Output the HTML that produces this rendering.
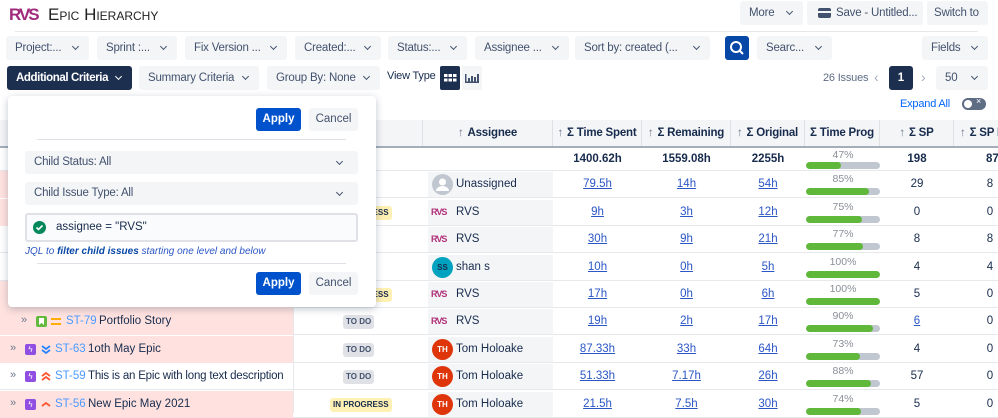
<!DOCTYPE html>
<html><head><meta charset="utf-8"><style>
*{box-sizing:border-box;margin:0;padding:0}
body{width:998px;height:413px;overflow:hidden;background:#fff;font-family:"Liberation Sans",sans-serif;font-size:11.5px;color:#172b4d;position:relative}
.a{position:absolute}
.btn{position:absolute;height:24px;background:#f4f5f7;border-radius:3px;color:#42526e;font-size:11.5px;line-height:24px;padding-left:9px;white-space:nowrap;letter-spacing:-0.2px}
.chev{display:inline-block;width:5px;height:5px;border-right:1.5px solid currentColor;border-bottom:1.5px solid currentColor;transform:rotate(45deg);position:absolute;right:11px;top:8px}
.hd{position:absolute;top:120px;height:26px;line-height:26px;font-weight:bold;font-size:11.5px;text-align:center;color:#172b4d;border-right:1px solid #dfe1e6;white-space:nowrap;letter-spacing:-0.2px}
.hd .up{color:#6b778c;font-weight:normal;margin-right:4px}
.row{position:absolute;left:0;width:998px;height:27px;border-bottom:1px solid #e6e8eb}
.cell{position:absolute;top:0;height:27px;line-height:27px;text-align:center;font-size:11.5px}
.lk{color:#2b56c5;text-decoration:underline}
.pct{position:absolute;left:806px;width:74px;top:2px;text-align:center;font-size:10.5px;color:#8a8f98;line-height:13px}
.bar{position:absolute;left:806px;width:74px;top:17px;height:7px;border-radius:4px;background:#c1c7d0;overflow:hidden}
.bar i{display:block;height:7px;background:#5fb83a;border-radius:4px}
.asg{position:absolute;left:428px;width:125px;top:1px;height:25px;background:#f4f5f7}
.av{position:absolute;left:4px;top:2px;width:21px;height:21px;border-radius:50%;color:#fff;font-size:8px;text-align:center;line-height:21px;font-weight:bold}
.nm{position:absolute;left:28px;top:0;line-height:25px;font-size:11.5px;color:#172b4d}
.rvs{position:absolute;left:3px;top:7px;font-weight:bold;font-size:9px;color:#b0307a;letter-spacing:-1px}
.pill{position:absolute;top:7px;height:14px;line-height:14px;font-size:8px;font-weight:bold;padding:0 3px;border-radius:3px}
.todo{background:#dfe1e6;color:#42526e}
.inp{background:#fff0b3;color:#172b4d}
.key{position:absolute;top:7px;color:#4c9aff;font-size:11.5px}
.sum{position:absolute;top:7px;font-size:11.5px;color:#172b4d;white-space:nowrap}
</style></head><body>

<div class="a" style="left:9px;top:5px;font-size:17px;font-weight:bold;letter-spacing:-2px;color:#a02b7d">RVS</div>
<div class="a" style="left:48px;top:5px;font-size:17px;color:#222;font-variant:small-caps">Epic Hierarchy</div>
<div class="a" style="left:15px;top:31px;width:963px;height:1px;background:#e8e8e8"></div>

<div class="btn" style="left:740px;top:1px;width:63px">More<span class="chev"></span></div>
<div class="btn" style="left:807px;top:1px;width:116px;padding-left:29px">Save - Untitled...<span class="a" style="left:11px;top:7px;width:13px;height:10px;background:#42526e;border-radius:2px"></span><span class="a" style="left:11px;top:10px;width:13px;height:2px;background:#f4f5f7"></span></div>
<div class="btn" style="left:927px;top:1px;width:61px;padding-left:7px">Switch to</div>

<div class="btn" style="left:6px;top:36px;width:83px">Project:...<span class="chev"></span></div>
<div class="btn" style="left:97px;top:36px;width:80px">Sprint :...<span class="chev"></span></div>
<div class="btn" style="left:185px;top:36px;width:102px">Fix Version ...<span class="chev"></span></div>
<div class="btn" style="left:295px;top:36px;width:86px">Created:...<span class="chev"></span></div>
<div class="btn" style="left:388px;top:36px;width:79px">Status:...<span class="chev"></span></div>
<div class="btn" style="left:475px;top:36px;width:94px">Assignee ...<span class="chev"></span></div>
<div class="btn" style="left:575px;top:36px;width:135px">Sort by: created (...<span class="chev"></span></div>
<div class="a" style="left:725px;top:36px;width:24px;height:24px;background:#0747a6;border-radius:3px">
<svg width="24" height="24"><circle cx="11" cy="11" r="5" fill="none" stroke="#fff" stroke-width="2"/><line x1="14.5" y1="14.5" x2="18" y2="18" stroke="#fff" stroke-width="2"/></svg></div>
<div class="btn" style="left:757px;top:36px;width:75px">Searc...<span class="chev"></span></div>
<div class="btn" style="left:922px;top:36px;width:66px">Fields<span class="chev"></span></div>

<div class="btn" style="left:7px;top:66px;width:125px;background:#1d2f4f;color:#fff;font-weight:bold;letter-spacing:-0.4px">Additional Criteria<span class="chev"></span></div>
<div class="btn" style="left:139px;top:66px;width:120px">Summary Criteria<span class="chev"></span></div>
<div class="btn" style="left:267px;top:66px;width:113px">Group By: None<span class="chev"></span></div>
<div class="a" style="left:387px;top:70px;font-size:11px;color:#172b4d;letter-spacing:-0.2px">View Type</div>
<div class="a" style="left:440px;top:66px;width:20px;height:24px;background:#1d2f4f;border-radius:2px">
<svg width="20" height="24"><g fill="#fff"><rect x="4" y="8" width="3.5" height="3"/><rect x="8.5" y="8" width="3.5" height="3"/><rect x="13" y="8" width="3.5" height="3"/><rect x="4" y="12.5" width="3.5" height="3"/><rect x="8.5" y="12.5" width="3.5" height="3"/><rect x="13" y="12.5" width="3.5" height="3"/></g></svg></div>
<div class="a" style="left:462px;top:66px;width:20px;height:24px;background:#f4f5f7">
<svg width="20" height="24"><g fill="#42526e"><rect x="3" y="8" width="1.5" height="9"/><rect x="3" y="15.5" width="14" height="1.5"/><rect x="6" y="12" width="2" height="4"/><rect x="9" y="10" width="2" height="6"/><rect x="12" y="11" width="2" height="5"/><rect x="15" y="8" width="2" height="8"/></g></svg></div>

<div class="a" style="left:823px;top:72px;color:#5e6c84;font-size:11px;letter-spacing:-0.2px">26 Issues</div>
<div class="a" style="left:874px;top:69px;color:#a5adba;font-size:14px">‹</div>
<div class="a" style="left:889px;top:66px;width:24px;height:24px;background:#1d2f4f;border-radius:3px;color:#fff;text-align:center;line-height:24px;font-weight:bold">1</div>
<div class="a" style="left:921px;top:69px;color:#a5adba;font-size:14px">›</div>
<div class="btn" style="left:936px;top:66px;width:52px">50<span class="chev"></span></div>

<div class="a" style="left:900px;top:98px;color:#0065ff;font-size:11px;letter-spacing:-0.2px">Expand All</div>
<div class="a" style="left:962px;top:98px;width:24px;height:12px;background:#5e6c84;border-radius:6px"><div class="a" style="left:2px;top:2px;width:8px;height:8px;background:#fff;border-radius:50%"></div><div class="a" style="left:14px;top:-2px;color:#fff;font-size:9px">×</div></div>

<div class="a" style="left:0;top:120px;width:998px;height:26px;background:#f4f5f7"></div>
<div class="a" style="left:0;top:146px;width:998px;height:2px;background:#a5adba"></div>
<div class="hd" style="left:293px;width:130px"></div>
<div class="hd" style="left:423px;width:130px"><span class="up">↑</span>Assignee</div>
<div class="hd" style="left:553px;width:89px"><span class="up">↑</span>Σ Time Spent</div>
<div class="hd" style="left:642px;width:89px"><span class="up">↑</span>Σ Remaining</div>
<div class="hd" style="left:731px;width:74px"><span class="up">↑</span>Σ Original</div>
<div class="hd" style="left:805px;width:75px">Σ Time Prog</div>
<div class="hd" style="left:880px;width:74px"><span class="up">↑</span>Σ SP</div>
<div class="hd" style="left:954px;width:60px;text-align:left;padding-left:6px"><span class="up">↑</span>Σ SP D</div>

<div class="row" style="top:148px;height:23px">
<div class="cell" style="left:553px;width:89px;line-height:23px;font-weight:bold">1400.62h</div>
<div class="cell" style="left:642px;width:89px;line-height:23px;font-weight:bold">1559.08h</div>
<div class="cell" style="left:731px;width:74px;line-height:23px;font-weight:bold">2255h</div>
<div class="pct" style="top:1px">47%</div><div class="bar" style="top:14px"><i style="width:47%"></i></div>
<div class="cell" style="left:880px;width:74px;line-height:23px;font-weight:bold">198</div>
<div class="cell" style="left:954px;width:70px;line-height:23px;font-weight:bold;text-align:left;padding-left:32px">87</div>
</div>

<div class="row" style="top:171px"><div class="a" style="left:0;top:0;width:293px;height:27px;background:#ffe2df"></div>
<div class="asg"><div class="av" style="background:#c1c7d0"><svg width="21" height="21"><circle cx="10.5" cy="8" r="3.5" fill="#fff"/><path d="M4 17a6.5 5 0 0 1 13 0z" fill="#fff"/></svg></div><div class="nm">Unassigned</div></div>
<div class="cell" style="left:553px;width:89px"><span class="lk">79.5h</span></div><div class="cell" style="left:642px;width:89px"><span class="lk">14h</span></div><div class="cell" style="left:731px;width:74px"><span class="lk">54h</span></div>
<div class="pct">85%</div><div class="bar"><i style="width:85%"></i></div>
<div class="cell" style="left:880px;width:74px">29</div><div class="cell" style="left:954px;width:72px">8</div></div>

<div class="row" style="top:198.5px"><div class="a" style="left:0;top:0;width:293px;height:27px;background:#ffe2df"></div>
<div class="pill inp" style="left:330px">IN PROGRESS</div>
<div class="asg"><span class="rvs">RVS</span><div class="nm">RVS</div></div>
<div class="cell" style="left:553px;width:89px"><span class="lk">9h</span></div><div class="cell" style="left:642px;width:89px"><span class="lk">3h</span></div><div class="cell" style="left:731px;width:74px"><span class="lk">12h</span></div>
<div class="pct">75%</div><div class="bar"><i style="width:75%"></i></div>
<div class="cell" style="left:880px;width:74px">0</div><div class="cell" style="left:954px;width:72px">0</div></div>

<div class="row" style="top:226px">
<div class="asg"><span class="rvs">RVS</span><div class="nm">RVS</div></div>
<div class="cell" style="left:553px;width:89px"><span class="lk">30h</span></div><div class="cell" style="left:642px;width:89px"><span class="lk">9h</span></div><div class="cell" style="left:731px;width:74px"><span class="lk">21h</span></div>
<div class="pct">77%</div><div class="bar"><i style="width:77%"></i></div>
<div class="cell" style="left:880px;width:74px">8</div><div class="cell" style="left:954px;width:72px">8</div></div>

<div class="row" style="top:253.5px">
<div class="asg"><div class="av" style="background:#00a3bf;color:#172b4d">SS</div><div class="nm">shan s</div></div>
<div class="cell" style="left:553px;width:89px"><span class="lk">10h</span></div><div class="cell" style="left:642px;width:89px"><span class="lk">0h</span></div><div class="cell" style="left:731px;width:74px"><span class="lk">5h</span></div>
<div class="pct">100%</div><div class="bar"><i style="width:100%"></i></div>
<div class="cell" style="left:880px;width:74px">4</div><div class="cell" style="left:954px;width:72px">4</div></div>

<div class="row" style="top:281px"><div class="a" style="left:0;top:0;width:293px;height:27px;background:#ffe2df"></div>
<div class="pill inp" style="left:330px">IN PROGRESS</div>
<div class="asg"><span class="rvs">RVS</span><div class="nm">RVS</div></div>
<div class="cell" style="left:553px;width:89px"><span class="lk">17h</span></div><div class="cell" style="left:642px;width:89px"><span class="lk">0h</span></div><div class="cell" style="left:731px;width:74px"><span class="lk">6h</span></div>
<div class="pct">100%</div><div class="bar"><i style="width:100%"></i></div>
<div class="cell" style="left:880px;width:74px">5</div><div class="cell" style="left:954px;width:72px">0</div></div>

<div class="row" style="top:308px"><div class="a" style="left:0;top:0;width:293px;height:27px;background:#ffe2df"></div>
<div class="a" style="left:21px;top:6px;color:#6b778c;font-size:11px">»</div>
<div class="a" style="left:36px;top:8px;width:11px;height:11px;background:#63ba3c;border-radius:2px"><div class="a" style="left:3px;top:2px;width:5px;height:7px;background:#fff;clip-path:polygon(0 0,100% 0,100% 100%,50% 70%,0 100%)"></div></div>
<div class="a" style="left:51px;top:10px;width:10px;height:2px;background:#ffab00"></div><div class="a" style="left:51px;top:15px;width:10px;height:2px;background:#ffab00"></div>
<div class="key" style="left:66px">ST-79</div>
<div class="sum" style="left:99px">Portfolio Story</div>
<div class="pill todo" style="left:343px">TO DO</div>
<div class="asg"><span class="rvs">RVS</span><div class="nm">RVS</div></div>
<div class="cell" style="left:553px;width:89px"><span class="lk">19h</span></div><div class="cell" style="left:642px;width:89px"><span class="lk">2h</span></div><div class="cell" style="left:731px;width:74px"><span class="lk">17h</span></div>
<div class="pct">90%</div><div class="bar"><i style="width:90%"></i></div>
<div class="cell" style="left:880px;width:74px"><span class="lk">6</span></div><div class="cell" style="left:954px;width:72px">0</div></div>

<div class="row" style="top:335.5px"><div class="a" style="left:0;top:0;width:293px;height:27px;background:#ffe2df"></div>
<div class="a" style="left:10px;top:6px;color:#6b778c;font-size:11px">»</div>
<div class="a" style="left:25px;top:8px;width:11px;height:11px;background:#904ee2;border-radius:2px;color:#fff;font-size:8px;text-align:center;line-height:11px">ϟ</div>
<svg class="a" style="left:40px;top:7px" width="12" height="12"><path d="M2 3l4 3 4-3M2 7l4 3 4-3" stroke="#2684ff" stroke-width="1.8" fill="none"/></svg>
<div class="key" style="left:55px">ST-63</div>
<div class="sum" style="left:88px">1oth May Epic</div>
<div class="pill todo" style="left:343px">TO DO</div>
<div class="asg"><div class="av" style="background:#de350b">TH</div><div class="nm">Tom Holoake</div></div>
<div class="cell" style="left:553px;width:89px"><span class="lk">87.33h</span></div><div class="cell" style="left:642px;width:89px"><span class="lk">33h</span></div><div class="cell" style="left:731px;width:74px"><span class="lk">64h</span></div>
<div class="pct">73%</div><div class="bar"><i style="width:73%"></i></div>
<div class="cell" style="left:880px;width:74px">4</div><div class="cell" style="left:954px;width:72px">0</div></div>

<div class="row" style="top:363px">
<div class="a" style="left:10px;top:6px;color:#6b778c;font-size:11px">»</div>
<div class="a" style="left:25px;top:8px;width:11px;height:11px;background:#904ee2;border-radius:2px;color:#fff;font-size:8px;text-align:center;line-height:11px">ϟ</div>
<svg class="a" style="left:40px;top:7px" width="12" height="12"><path d="M2 6l4-3 4 3M2 10l4-3 4 3" stroke="#ff5630" stroke-width="1.8" fill="none"/></svg>
<div class="key" style="left:55px">ST-59</div>
<div class="sum" style="left:88px;letter-spacing:-0.2px">This is an Epic with long text description</div>
<div class="pill todo" style="left:343px">TO DO</div>
<div class="asg"><div class="av" style="background:#de350b">TH</div><div class="nm">Tom Holoake</div></div>
<div class="cell" style="left:553px;width:89px"><span class="lk">51.33h</span></div><div class="cell" style="left:642px;width:89px"><span class="lk">7.17h</span></div><div class="cell" style="left:731px;width:74px"><span class="lk">26h</span></div>
<div class="pct">88%</div><div class="bar"><i style="width:88%"></i></div>
<div class="cell" style="left:880px;width:74px">57</div><div class="cell" style="left:954px;width:72px">0</div></div>

<div class="row" style="top:390.5px"><div class="a" style="left:0;top:0;width:293px;height:27px;background:#ffe2df"></div>
<div class="a" style="left:10px;top:6px;color:#6b778c;font-size:11px">»</div>
<div class="a" style="left:25px;top:8px;width:11px;height:11px;background:#904ee2;border-radius:2px;color:#fff;font-size:8px;text-align:center;line-height:11px">ϟ</div>
<svg class="a" style="left:40px;top:7px" width="12" height="12"><path d="M2 8l4-3 4 3" stroke="#ff5630" stroke-width="1.8" fill="none"/></svg>
<div class="key" style="left:55px">ST-56</div>
<div class="sum" style="left:88px">New Epic May 2021</div>
<div class="pill inp" style="left:330px">IN PROGRESS</div>
<div class="asg"><div class="av" style="background:#de350b">TH</div><div class="nm">Tom Holoake</div></div>
<div class="cell" style="left:553px;width:89px"><span class="lk">21.5h</span></div><div class="cell" style="left:642px;width:89px"><span class="lk">7.5h</span></div><div class="cell" style="left:731px;width:74px"><span class="lk">30h</span></div>
<div class="pct">74%</div><div class="bar"><i style="width:74%"></i></div>
<div class="cell" style="left:880px;width:74px">5</div><div class="cell" style="left:954px;width:72px">0</div></div>

<div class="a" style="left:293px;top:148px;width:1px;height:265px;background:#e6e8eb"></div>

<div class="a" style="left:8px;top:96px;width:368px;height:211px;background:#fff;border-radius:4px;box-shadow:0 2px 8px rgba(9,30,66,0.25)">
<div class="a" style="left:248px;top:12px;width:45px;height:23px;background:#0052cc;border-radius:3px;color:#fff;font-weight:bold;text-align:center;line-height:23px">Apply</div>
<div class="a" style="left:301px;top:12px;width:49px;height:23px;background:#f4f5f7;border-radius:3px;color:#42526e;text-align:center;line-height:23px">Cancel</div>
<div class="a" style="left:29px;top:43px;width:309px;height:1px;background:#dfe1e6"></div>
<div class="btn" style="left:17px;top:55px;width:333px;height:23px;line-height:23px">Child Status: All<span class="chev" style="right:16px"></span></div>
<div class="btn" style="left:17px;top:86px;width:333px;height:23px;line-height:23px">Child Issue Type: All<span class="chev" style="right:16px"></span></div>
<div class="a" style="left:17px;top:117px;width:333px;height:29px;border:2px solid #dfe1e6;background:#fafbfc;border-radius:3px">
<div class="a" style="left:6px;top:6px;width:13px;height:13px;border-radius:50%;background:#00875a"><svg width="13" height="13"><path d="M3.5 6.5l2 2 4-4" stroke="#fff" stroke-width="1.6" fill="none"/></svg></div>
<div class="a" style="left:29px;top:6px;font-size:11.5px;color:#172b4d">assignee = "RVS"</div></div>
<div class="a" style="left:17px;top:150px;font-size:10px;font-style:italic;color:#2b56c5">JQL to <b style="color:#0747a6">filter child issues</b> starting one level and below</div>
<div class="a" style="left:29px;top:167px;width:309px;height:1px;background:#dfe1e6"></div>
<div class="a" style="left:248px;top:176px;width:45px;height:23px;background:#0052cc;border-radius:3px;color:#fff;font-weight:bold;text-align:center;line-height:23px">Apply</div>
<div class="a" style="left:301px;top:176px;width:49px;height:23px;background:#f4f5f7;border-radius:3px;color:#42526e;text-align:center;line-height:23px">Cancel</div>
</div>
</body></html>
